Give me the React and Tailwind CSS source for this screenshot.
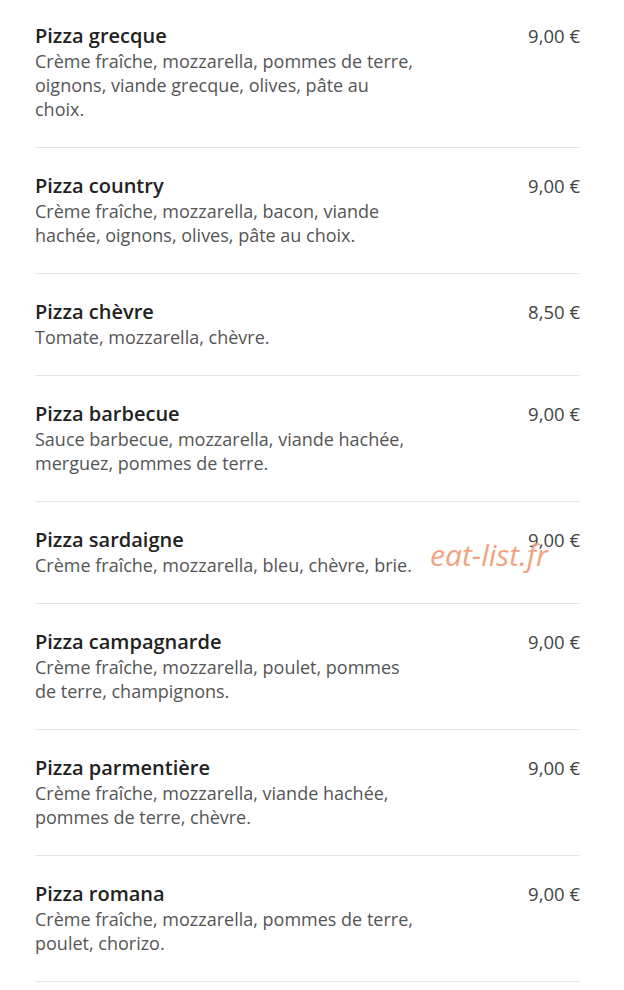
import React from "react";

const pizzas = [
  { name: "Pizza grecque", desc: "Crème fraîche, mozzarella, pommes de terre, oignons, viande grecque, olives, pâte au choix.", price: "9,00 €" },
  { name: "Pizza country", desc: "Crème fraîche, mozzarella, bacon, viande hachée, oignons, olives, pâte au choix.", price: "9,00 €" },
  { name: "Pizza chèvre", desc: "Tomate, mozzarella, chèvre.", price: "8,50 €" },
  { name: "Pizza barbecue", desc: "Sauce barbecue, mozzarella, viande hachée, merguez, pommes de terre.", price: "9,00 €" },
  { name: "Pizza sardaigne", desc: "Crème fraîche, mozzarella, bleu, chèvre, brie.", price: "9,00 €" },
  { name: "Pizza campagnarde", desc: "Crème fraîche, mozzarella, poulet, pommes de terre, champignons.", price: "9,00 €" },
  { name: "Pizza parmentière", desc: "Crème fraîche, mozzarella, viande hachée, pommes de terre, chèvre.", price: "9,00 €" },
  { name: "Pizza romana", desc: "Crème fraîche, mozzarella, pommes de terre, poulet, chorizo.", price: "9,00 €" },
];

const MenuItem = ({ item, first }) => (
  <div className={`flex justify-between border-b border-[#e6e6e6] pb-[26px] ${first ? "pt-[23px]" : "pt-[25px]"}`}>
    <div className="w-[386px]">
      <h3 className="text-[20px] leading-[26px] font-semibold text-[#222]">{item.name}</h3>
      <p className="text-[18px] leading-[24px] text-[#555]">{item.desc}</p>
    </div>
    <span className="text-[18.5px] leading-[26px] text-[#444] whitespace-nowrap">{item.price}</span>
  </div>
);

export default function App() {
  return (
    <div className="relative w-[624px] h-[990px] overflow-hidden bg-white font-['Open_Sans',sans-serif]">
      <div className="ml-[35px] w-[545px]">
        {pizzas.map((p, i) => (
          <MenuItem key={p.name} item={p} first={i === 0} />
        ))}
      </div>
      {/* watermark */}
      <span className="absolute left-[430px] top-[532px] text-[30px] italic text-[#f19a74] opacity-90 font-['Open_Sans',sans-serif]">
        eat-list.fr
      </span>
    </div>
  );
}
